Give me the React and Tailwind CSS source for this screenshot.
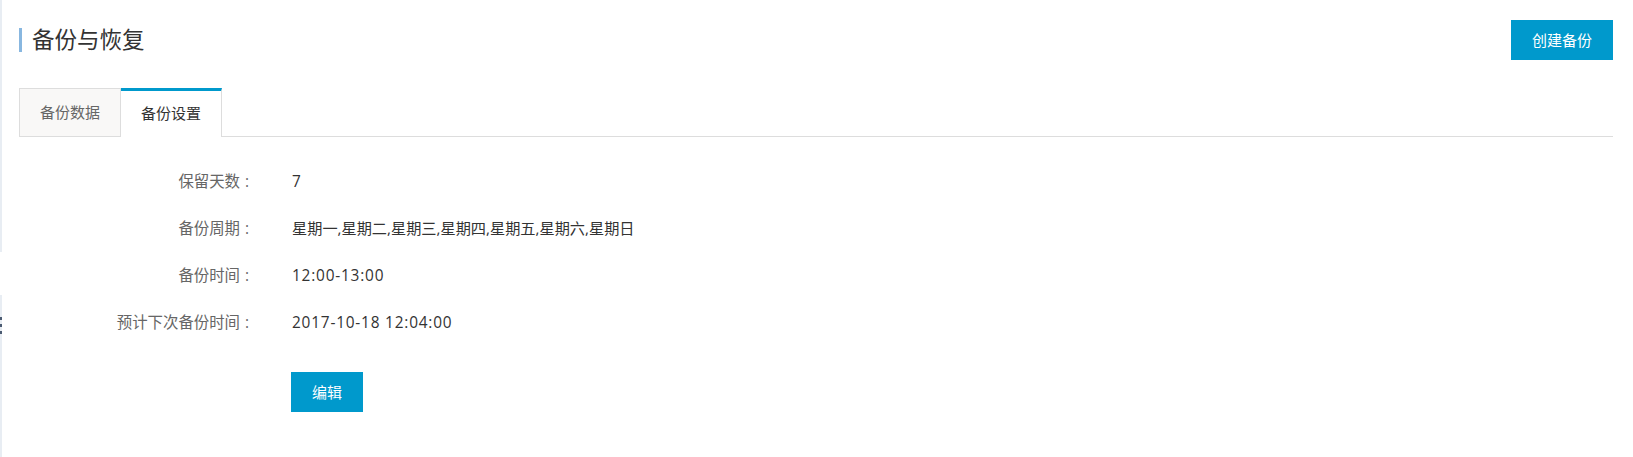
const FONT = { fontFamily: '"Open Sans", "Noto Sans CJK SC", sans-serif' };

const rows = [
  { label: '保留天数', value: '7', digits: true },
  { label: '备份周期', value: '星期一,星期二,星期三,星期四,星期五,星期六,星期日' },
  { label: '备份时间', value: '12:00-13:00', digits: true },
  { label: '预计下次备份时间', value: '2017-10-18 12:04:00', digits: true },
];

export default function App() {
  return (
    <div
      className="relative min-h-[457px] w-[1633px] bg-white border-l-2 border-[#e8edf3] pl-[17px] pr-[20px] pt-[20px]"
      style={FONT}
    >
      {/* sidebar handle */}
      <div className="absolute -left-[2px] top-[252px] h-[43px] w-[2px] bg-white" />
      <div className="absolute -left-[2px] top-[317px] flex flex-col gap-[4px]">
        <span className="block h-[3px] w-[2px] bg-[#4b5b72]" />
        <span className="block h-[3px] w-[2px] bg-[#4b5b72]" />
        <span className="block h-[3px] w-[2px] bg-[#4b5b72]" />
      </div>

      <div className="flex h-[40px] items-center justify-between">
        <div className="flex items-center">
          <span className="block h-[24px] w-[3px] bg-[#88b7e0]" />
          <h1 className="ml-[10px] text-[22.5px] leading-none text-[#333]">备份与恢复</h1>
        </div>
        <button className="h-[40px] w-[102px] bg-[#0099cc] text-[15px] text-white">创建备份</button>
      </div>

      <div className="mt-[28px] flex border-b border-[#dddddd]">
        <div className="-mb-px flex h-[49px] w-[102px] items-center justify-center border border-[#dddddd] bg-[#f9f8f7] text-[15px] text-[#666]">
          备份数据
        </div>
        <div className="-mb-px flex h-[49px] w-[101px] items-center justify-center border-t-[3px] border-r border-t-[#0099cc] border-r-[#dddddd] bg-white pb-[2px] text-[15px] text-[#333]">
          备份设置
        </div>
      </div>

      <div className="pt-[21px]">
        {rows.map((r) => (
          <div key={r.label} className="flex h-[47px] items-center text-[15.4px]">
            <div className="w-[236px] text-right text-[#666]">
              {r.label}
              <span className="ml-[5px] mr-[6px]">:</span>
            </div>
            <div
              className={
                r.digits
                  ? 'ml-[37px] tracking-[0.8px] text-[#333]'
                  : 'ml-[37px] text-[15.2px] text-[#333]'
              }
            >
              {r.value}
            </div>
          </div>
        ))}
        <div className="mt-[26px] pl-[272px]">
          <button className="h-[40px] w-[72px] bg-[#0099cc] text-[15px] text-white">编辑</button>
        </div>
      </div>
    </div>
  );
}
